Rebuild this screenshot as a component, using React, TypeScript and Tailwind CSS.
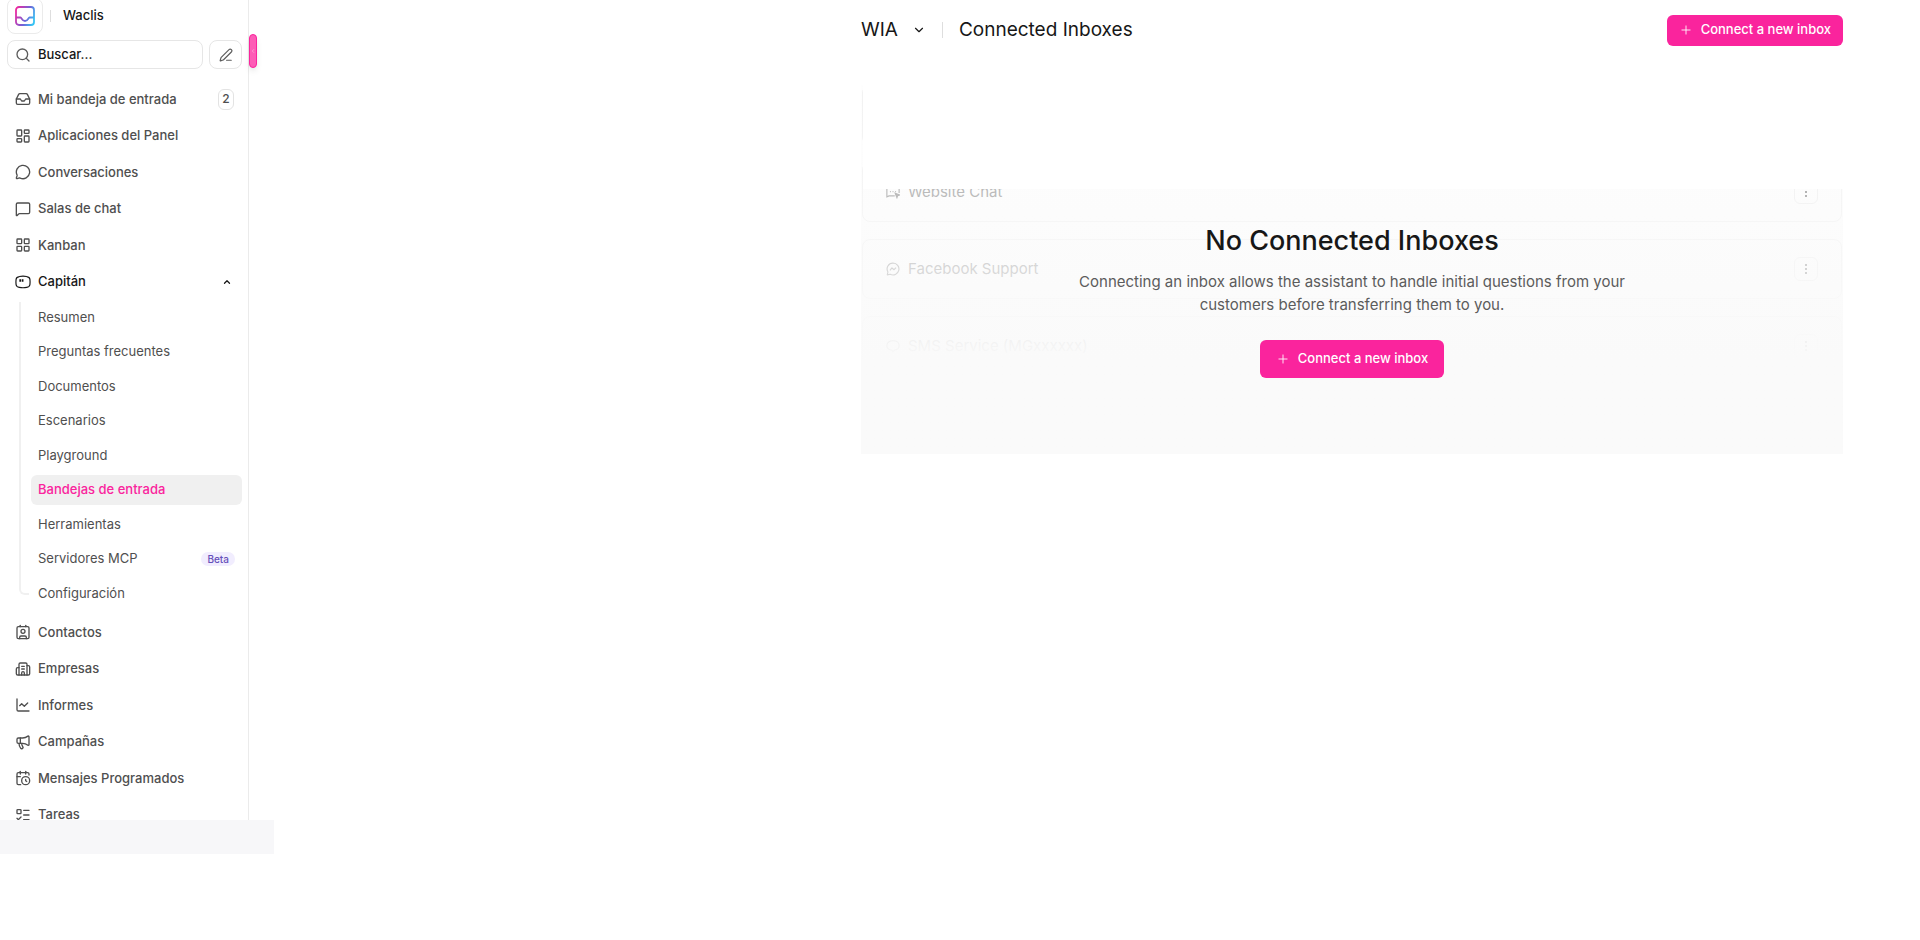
import type { ReactNode } from 'react';
import {
  Building2,
  CalendarClock,
  ChartLine,
  ChevronDown,
  ChevronLeft,
  ChevronUp,
  Contact,
  Inbox,
  LayoutDashboard,
  LayoutGrid,
  ListTodo,
  Megaphone,
  MessageCircle,
  MessageSquare,
  PenLine,
  Plus,
  Search,
} from 'lucide-react';

function CaptainIcon() {
  return (
    <svg viewBox="0 0 24 24" className="size-4 shrink-0" fill="none" stroke="currentColor" strokeWidth="1.8">
      <path d="M6.500 3.800C10 3.200 14 3.200 17.500 3.800c3 .4 4.600 1.600 4.900 4.400.3 2.600.3 5 0 7.600-.3 2.800-1.900 4-4.900 4.400-3.500.5-7.500.5-11 0-3-.4-4.600-1.600-4.900-4.400-.3-2.600-.3-5 0-7.600.3-2.800 1.900-4 4.900-4.400Z" />
      <path d="M7.800 8v3.500M11.400 8v3.500" strokeWidth="2.600" />
    </svg>
  );
}

function LogoIcon() {
  return (
    <svg viewBox="0 0 20 20" className="size-5" fill="none" strokeWidth="1.800">
      <defs>
        <linearGradient id="logo" x1="0" y1="4" x2="20" y2="12" gradientUnits="userSpaceOnUse">
          <stop offset="0" stopColor="#f5249c" />
          <stop offset="0.600" stopColor="#6f63d8" />
          <stop offset="1" stopColor="#35c3f3" />
        </linearGradient>
      </defs>
      <rect x="1" y="1" width="18" height="18" rx="3" stroke="url(#logo)" />
      <path d="M1 11.500h4.500c1.200 0 1.500 3.500 4.500 3.500s3.300-3.500 4.500-3.500H19" stroke="url(#logo)" />
    </svg>
  );
}

function WebsiteIcon() {
  return (
    <svg viewBox="0 0 16 16" className="size-3.5" fill="none" stroke="currentColor" strokeWidth="1.300">
      <path d="M10 12.500H3.500L1 13.500V3.500A1.500 1.500 0 0 1 2.500 2h11A1.500 1.500 0 0 1 15 3.500V9" />
      <path d="M4.500 7.500h1M7.500 7.500h1M10.500 7.500h1" />
      <path d="m10.500 9.500 5 2-2.200.8-.8 2.200Z" fill="currentColor" />
    </svg>
  );
}

function MessengerIcon() {
  return (
    <svg viewBox="0 0 16 16" className="size-3.5" fill="none" stroke="currentColor" strokeWidth="1.300" strokeLinejoin="round">
      <path d="M8 1.200a6.800 6.800 0 1 1-3.200 12.800l-3.300.7.700-3.300A6.800 6.800 0 0 1 8 1.200Z" />
      <path d="m4.500 9.500 2.300-2.700 2.400 2 2.300-2.500" />
    </svg>
  );
}

function SmsIcon() {
  return (
    <svg viewBox="0 0 16 16" className="size-3.5" fill="none" stroke="currentColor" strokeWidth="1.300" strokeLinejoin="round">
      <path d="M8 2c4 0 7 2.200 7 5.300 0 2.700-2.200 4.700-5 5.200L8 14.500l-2-2c-2.800-.5-5-2.500-5-5.200C1 4.200 4 2 8 2Z" />
    </svg>
  );
}

type Item = { label: string; icon: ReactNode; count?: number; open?: boolean };

const topItems: Item[] = [
  { label: 'Mi bandeja de entrada', icon: <Inbox className="size-4" />, count: 2 },
  { label: 'Aplicaciones del Panel', icon: <LayoutDashboard className="size-4" /> },
  { label: 'Conversaciones', icon: <MessageCircle className="size-4" /> },
  { label: 'Salas de chat', icon: <MessageSquare className="size-4" /> },
  { label: 'Kanban', icon: <LayoutGrid className="size-4" /> },
  { label: 'Capitán', icon: <CaptainIcon />, open: true },
];

const captainItems = [
  'Resumen',
  'Preguntas frecuentes',
  'Documentos',
  'Escenarios',
  'Playground',
  'Bandejas de entrada',
  'Herramientas',
  'Servidores MCP',
  'Configuración',
];

const bottomItems: Item[] = [
  { label: 'Contactos', icon: <Contact className="size-4" /> },
  { label: 'Empresas', icon: <Building2 className="size-4" /> },
  { label: 'Informes', icon: <ChartLine className="size-4" /> },
  { label: 'Campañas', icon: <Megaphone className="size-4" /> },
  { label: 'Mensajes Programados', icon: <CalendarClock className="size-4" /> },
  { label: 'Tareas', icon: <ListTodo className="size-4" /> },
];

const inboxes = [
  { name: '', icon: null },
  { name: 'Website Chat', icon: <WebsiteIcon /> },
  { name: 'Facebook Support', icon: <MessengerIcon /> },
  { name: 'SMS Service (MGxxxxxx)', icon: <SmsIcon /> },
];

function NavItem({ item }: { item: Item }) {
  return (
    <li className="flex">
      <a
        href="#"
        className={`flex flex-1 items-center gap-[7px] px-2 text-[13px] font-medium ${item.open ? 'text-[#171717]' : 'text-[#4f4f4f]'}`}
      >
        {item.icon}
        <span className="flex-1">{item.label}</span>
        {item.count && (
          <span className="flex h-[21px] w-4 items-center justify-center rounded-md border border-[#e3e3e3] text-xs">
            {item.count}
          </span>
        )}
        {item.open && <ChevronUp className="mr-0.5 size-2.5" strokeWidth={3} />}
      </a>
    </li>
  );
}

function Sidebar() {
  return (
    <aside className="w-[274px] shrink-0">
      <div className="flex h-[820px] overflow-hidden">
        <div className="w-[249px] shrink-0 border-r border-[#ebebeb] pr-1.5 pl-[7px]">
          {/* Account */}
          <div className="flex h-[34px] items-end">
            <div className="flex size-9 shrink-0 items-center justify-center rounded-lg border border-[#ebebeb]">
              <LogoIcon />
            </div>
            <div className="flex h-9 items-center pl-[7px]">
              <span className="h-3 w-px bg-[#dedede]" />
              <span className="pl-3 text-[13px] font-medium text-[#171717]">Waclis</span>
            </div>
          </div>

          {/* Search */}
          <div className="mt-1.5 flex gap-1.5">
            <label className="flex h-[29px] flex-1 items-center gap-[7px] rounded-lg border border-[#e6e6e6] px-[7px]">
              <Search className="size-4 shrink-0 text-[#5c5c5c]" />
              <input
                type="text"
                placeholder="Buscar..."
                aria-label="Buscar"
                className="w-full min-w-0 bg-transparent text-[13px] font-medium outline-none placeholder:text-[#171717]"
              />
            </label>
            <button
              type="button"
              aria-label="Redactar"
              className="flex h-[29px] w-[33px] shrink-0 items-center justify-center rounded-lg border border-[#e6e6e6] text-[#5c5c5c]"
            >
              <PenLine className="size-3.5" />
            </button>
          </div>

          {/* Navigation */}
          <nav className="mt-3">
            <ul className="grid h-[219px] auto-rows-fr">
              {topItems.map((item) => (
                <NavItem key={item.label} item={item} />
              ))}
            </ul>
            <div className="relative">
              <span className="absolute left-3 top-0.5 h-[293px] w-2.5 rounded-bl-md border-b-2 border-l-2 border-[#f0f0f0]" />
              <ul className="grid h-[311px] auto-rows-fr pl-6">
                {captainItems.map((label) => (
                  <li key={label} className="flex items-center">
                    <a
                      href="#"
                      className={`flex h-[30px] flex-1 items-center justify-between rounded-md px-[7px] text-[13px] ${
                        label === 'Bandejas de entrada' ? 'bg-[#f0f0f0] font-medium text-[#fa249d]' : 'text-[#4f4f4f]'
                      }`}
                    >
                      {label}
                      {label === 'Servidores MCP' && (
                        <span className="rounded-full bg-[#f1edfe] px-1.5 text-[10px] leading-[14px] font-medium text-[#6550b9]">
                          Beta
                        </span>
                      )}
                    </a>
                  </li>
                ))}
              </ul>
            </div>
            <ul className="mt-[3px] grid h-[219px] auto-rows-fr">
              {bottomItems.map((item) => (
                <NavItem key={item.label} item={item} />
              ))}
            </ul>
          </nav>
        </div>
        <button
          type="button"
          aria-label="Contraer"
          className="mt-[34px] flex h-[34px] w-2 items-center justify-center rounded-sm border border-[#fa249d] bg-[#fd5cb6] text-white/70 shadow-md"
        >
          <ChevronLeft className="size-1.5" />
        </button>
      </div>
      <div className="h-[34px] bg-[#f7f7f9]" />
    </aside>
  );
}

function ConnectButton({ large = false }: { large?: boolean }) {
  return (
    <button
      type="button"
      className={`flex items-center gap-2 rounded-md bg-[#fa249d] text-[13px] font-medium text-white ${
        large ? 'h-[38px] px-4' : 'h-[31px] px-3'
      }`}
    >
      <Plus className="size-3.5" strokeWidth={1.5} />
      Connect a new inbox
    </button>
  );
}

function InboxCard({ name, icon }: { name: string; icon: ReactNode }) {
  return (
    <li className="flex h-[60px] items-center gap-2 rounded-lg border border-[#efefef] bg-white px-[23px] text-[15px] text-[#6f6f6f]">
      {icon}
      <span className="flex-1">{name}</span>
      <span className="flex size-6 items-center justify-center rounded-md border border-[#ebebeb]">
        <svg viewBox="0 0 12 12" className="size-3" fill="#606060">
          <path d="M5 1h2v2H5zM5 5h2v2H5zM5 9h2v2H5z" />
        </svg>
      </span>
    </li>
  );
}

export default function App() {
  return (
    <div className="flex bg-white font-['Inter',sans-serif] text-[#171717]">
      <Sidebar />
      <main className="min-w-0 flex-1 pl-[587px] pr-[77px]">
        <header className="flex h-[60px] items-center justify-between">
          <div className="flex items-center text-[19px]">
            <button type="button" className="flex items-center gap-3.5">
              WIA
              <ChevronDown className="size-3.5" />
            </button>
            <span className="ml-4 h-4 w-px bg-[#dedede]" />
            <h1 className="ml-4">Connected Inboxes</h1>
          </div>
          <ConnectButton />
        </header>

        <section className="relative mt-[25px] h-[369px] overflow-hidden">
          <ul className="flex flex-col gap-[17px] px-px" aria-hidden="true">
            {inboxes.map((inbox, i) => (
              <InboxCard key={i} name={inbox.name} icon={inbox.icon} />
            ))}
          </ul>
          {/* Fade over the sample rows */}
          <div className="absolute inset-0 bg-gradient-to-b from-[#fafafa]/25 to-[#fafafa] to-75%" />
          <div className="absolute top-0 right-0 left-0.5 h-[104px] bg-white" />
          <div className="absolute inset-x-0 top-[137px] flex flex-col items-center text-center">
            <h2 className="text-[27px] leading-[38px] font-medium">No Connected Inboxes</h2>
            <p className="mt-2.5 max-w-[560px] text-[15px] leading-[23px] text-[#5c5c5c]">
              Connecting an inbox allows the assistant to handle initial questions from your customers before
              transferring them to you.
            </p>
            <div className="mt-6">
              <ConnectButton large />
            </div>
          </div>
        </section>
      </main>
    </div>
  );
}
